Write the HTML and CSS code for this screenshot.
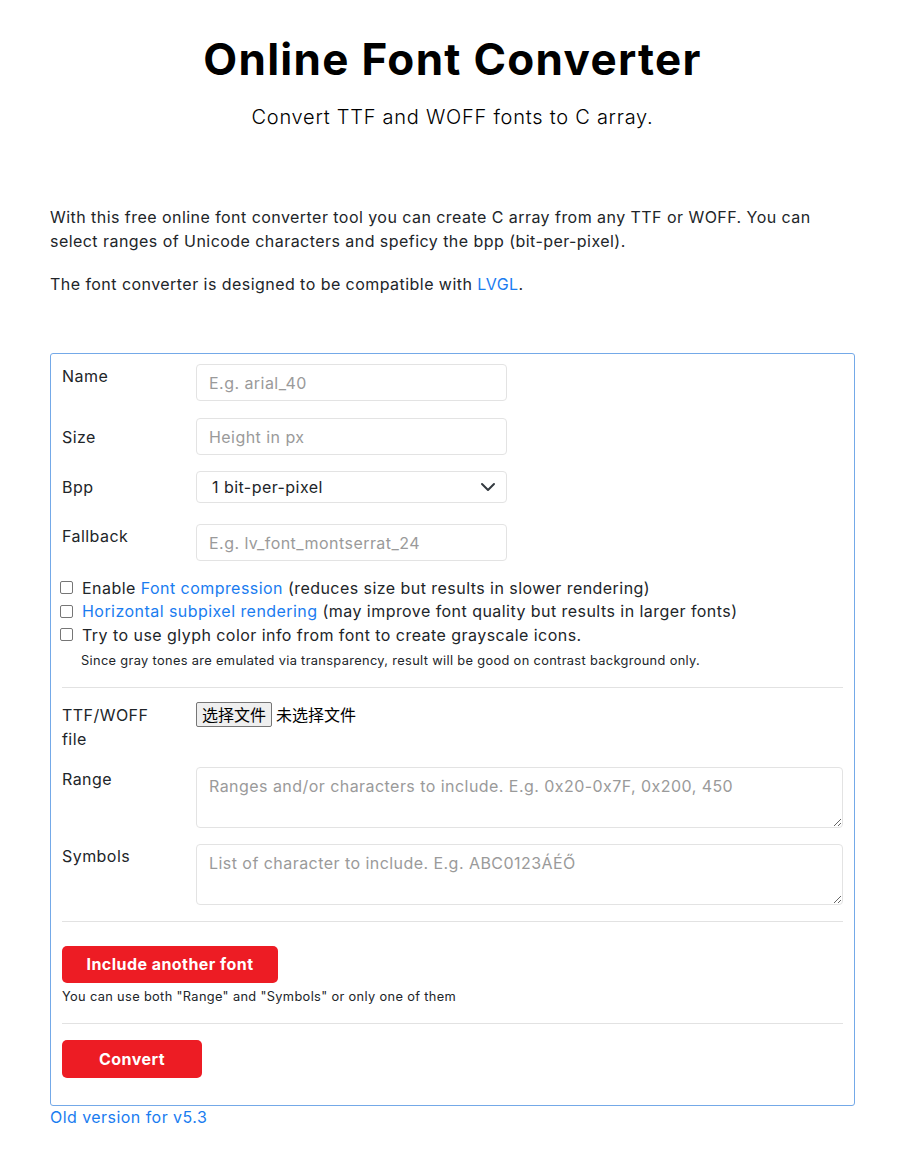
FILE: index.html
```html
<!DOCTYPE html>
<html lang="en">
<head>
<meta charset="utf-8">
<title>Online Font Converter</title>
<link rel="stylesheet" href="styles.css">
</head>
<body>
<div class="page">
  <header class="hero">
    <h1 class="title">Online Font Converter</h1>
    <p class="subtitle">Convert TTF and WOFF fonts to C array.</p>
  </header>

  <section class="intro">
    <p>With this free online font converter tool you can create C array from any TTF or WOFF. You can select ranges of Unicode characters and speficy the bpp (bit-per-pixel).</p>
    <p>The font converter is designed to be compatible with <a href="#">LVGL</a>.</p>
  </section>

  <form class="panel">
    <div class="row row-top row-name">
      <label class="lbl">Name</label>
      <input class="field" type="text" placeholder="E.g. arial_40">
    </div>
    <div class="row row-mid row-size">
      <label class="lbl">Size</label>
      <input class="field" type="text" placeholder="Height in px">
    </div>
    <div class="row row-mid row-bpp">
      <label class="lbl">Bpp</label>
      <div class="select">
        <span>1 bit-per-pixel</span>
        <svg class="chev" width="16" height="16" viewBox="0 0 16 16"><path d="M2 5l6 6 6-6" fill="none" stroke="#343a40" stroke-width="2" stroke-linecap="round" stroke-linejoin="round"/></svg>
      </div>
    </div>
    <div class="row row-top">
      <label class="lbl">Fallback</label>
      <input class="field" type="text" placeholder="E.g. lv_font_montserrat_24">
    </div>

    <div class="checks">
      <label class="check"><span class="box"></span><span>Enable <a href="#">Font compression</a> (reduces size but results in slower rendering)</span></label>
      <label class="check"><span class="box"></span><span><a href="#">Horizontal subpixel rendering</a> (may improve font quality but results in larger fonts)</span></label>
      <label class="check"><span class="box"></span><span>Try to use glyph color info from font to create grayscale icons.</span></label>
      <p class="note indent">Since gray tones are emulated via transparency, result will be good on contrast background only.</p>
    </div>

    <hr class="sep">

    <div class="row row-file">
      <label class="lbl">TTF/WOFF file</label>
      <div class="file">
        <span class="file-btn">选择文件</span>
        <span class="file-name">未选择文件</span>
      </div>
    </div>
    <div class="row row-area">
      <label class="lbl">Range</label>
      <textarea class="area" placeholder="Ranges and/or characters to include. E.g. 0x20-0x7F, 0x200, 450"></textarea>
    </div>
    <div class="row row-area">
      <label class="lbl">Symbols</label>
      <textarea class="area" placeholder="List of character to include. E.g. ABC0123ÁÉŐ"></textarea>
    </div>

    <hr class="sep sep2">

    <button type="button" class="btn btn-wide">Include another font</button>
    <p class="note">You can use both "Range" and "Symbols" or only one of them</p>

    <hr class="sep sep3">

    <button type="button" class="btn btn-convert">Convert</button>
  </form>

  <a class="old" href="#">Old version for v5.3</a>
</div>
</body>
</html>
```

FILE: styles.css
```css
* { box-sizing: border-box; }

html, body {
  margin: 0;
  padding: 0;
  background: #fff;
}

body {
  font-family: Inter, "Noto Sans", "DejaVu Sans", sans-serif;
  font-size: 16px;
  line-height: 24px;
  letter-spacing: 0.45px;
  color: #212529;
}

a {
  color: #1a7cf0;
  text-decoration: none;
}

.page {
  width: 805px;
  margin: 0 auto;
  padding-top: 33px;
}

.hero {
  text-align: center;
}

.title {
  margin: 0;
  font-size: 44px;
  line-height: 52px;
  font-weight: 700;
  color: #000;
  letter-spacing: 1.3px;
}

.subtitle {
  margin: 18px 0 0;
  font-size: 20px;
  line-height: 28px;
  font-weight: 300;
  color: #000;
  letter-spacing: 0.75px;
}

.intro {
  margin-top: 74px;
}

.intro p {
  margin: 0 0 19px;
}

.panel {
  margin-top: 57px;
  border: 1px solid #74a9e8;
  border-radius: 3px;
  padding: 10px 11px 27px;
}

.row {
  display: flex;
  align-items: flex-start;
}

.lbl {
  flex: 0 0 134px;
  padding-right: 28px;
}

.row-top { margin-bottom: 16px; }
.row-name { margin-bottom: 17px; }
.row-mid { margin-bottom: 16px; align-items: center; }
.row-bpp { margin-bottom: 21px; }

.field {
  width: 311px;
  height: 37px;
  border: 1px solid #e3e3e3;
  border-radius: 4px;
  padding: 6px 12px;
  font: inherit;
  letter-spacing: inherit;
  color: #212529;
  outline: none;
}

.field::placeholder,
.area::placeholder {
  color: #9a9a9a;
}

.select {
  width: 311px;
  height: 32px;
  border: 1px solid #e3e3e3;
  border-radius: 4px;
  padding: 0 10px 0 15px;
  display: flex;
  align-items: center;
  justify-content: space-between;
}

.chev { display: block; }

.checks {
  margin-top: -1px;
}

.check {
  display: flex;
  align-items: center;
  height: 23.5px;
  gap: 9px;
  margin-left: -2px;
}

.box {
  flex: 0 0 13px;
  width: 13px;
  height: 13px;
  border: 1px solid #767676;
  border-radius: 2px;
  background: #fff;
}

.note {
  margin: 0;
  font-size: 12.8px;
  line-height: 20px;
  letter-spacing: 0.35px;
}

.note.indent {
  margin: 4px 0 0 19px;
}

.sep {
  border: 0;
  border-top: 1px solid #e2e2e2;
  margin: 16px 0 14px;
}

.row-file {
  margin-bottom: 16px;
}

.row-file .lbl {
  padding-top: 1px;
}

.file {
  display: flex;
  align-items: center;
  gap: 4px;
  font-family: "Noto Sans CJK SC", sans-serif;
  font-size: 16px;
  letter-spacing: 0;
  color: #000;
}

.file-btn {
  display: inline-block;
  height: 25px;
  line-height: 21px;
  padding: 1px 5px;
  border: 1px solid #767676;
  border-radius: 2px;
  background: #efefef;
}

.row-area {
  margin-bottom: 16px;
}

.area {
  flex: 1;
  height: 61px;
  border: 1px solid #e3e3e3;
  border-radius: 4px;
  padding: 6px 12px;
  font: inherit;
  letter-spacing: inherit;
  color: #212529;
  resize: vertical;
  outline: none;
}

.sep2 { margin: 0 0 24px; }
.sep3 { margin: 16px 0 16px; }

.btn {
  display: block;
  height: 37px;
  border: 0;
  border-radius: 5px;
  background: #ed1c24;
  color: #fff;
  font: inherit;
  font-weight: 700;
  letter-spacing: inherit;
  text-align: center;
  padding: 0;
}

.btn-wide {
  width: 216px;
  margin-bottom: 4px;
}

.btn-convert {
  width: 140px;
  height: 38px;
}

.old {
  display: block;
  width: fit-content;
  margin-top: -1px;
}
```
